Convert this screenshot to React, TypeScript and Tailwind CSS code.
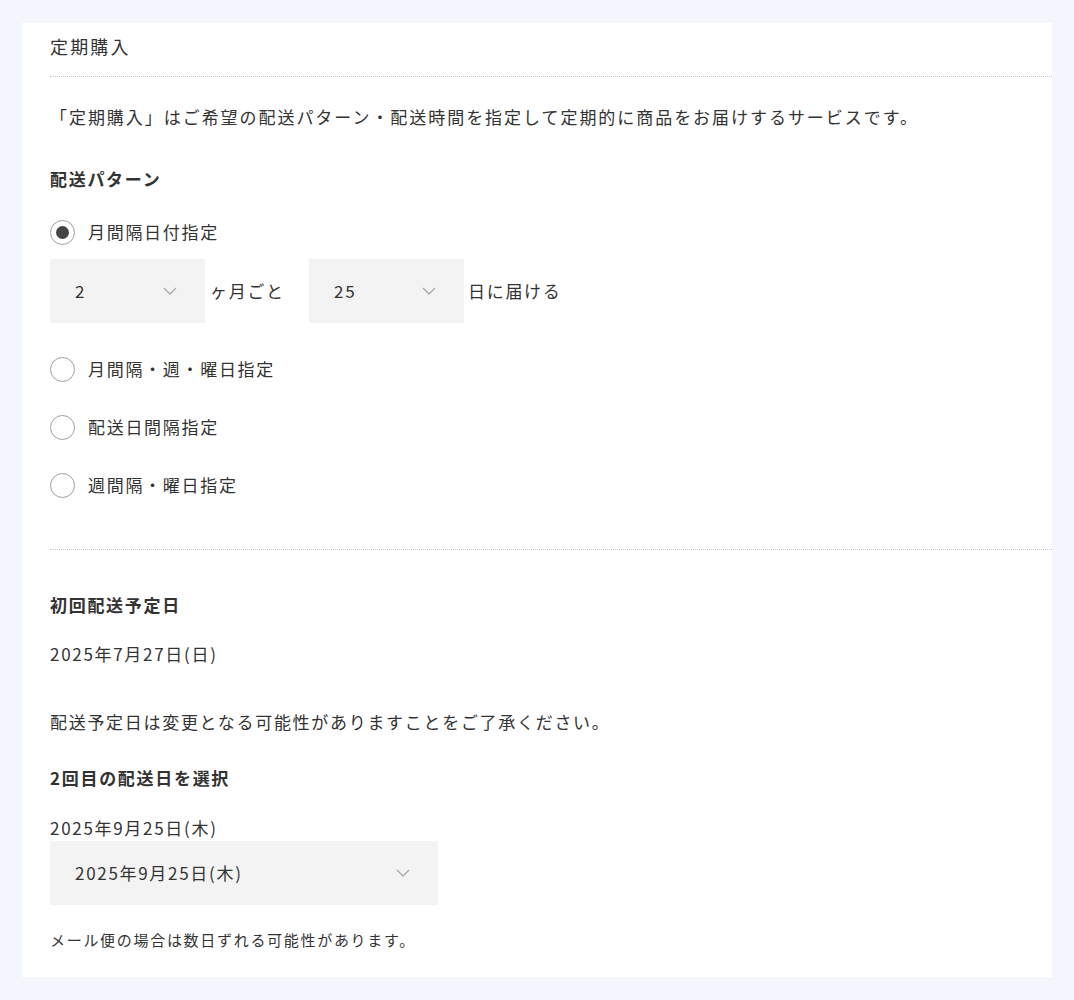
import { useState } from 'react';

const font = { fontFamily: '"Noto Sans CJK JP", "Noto Sans", sans-serif' };

const Chevron = () => (
  <svg className="w-[14px] h-[8px]" viewBox="0 0 14 8" fill="none" aria-hidden="true">
    <path d="M1 1l6 6 6-6" stroke="#a8a8a8" strokeWidth="1.3" />
  </svg>
);

const SelectBox = ({ value, width }: { value: string; width: string }) => (
  <div className={`flex items-center justify-between h-[64px] bg-[#f3f3f3] pl-[25px] pr-[28px] ${width}`}>
    <span>{value}</span>
    <Chevron />
  </div>
);

const Radio = ({ checked, label, onClick }: { checked: boolean; label: string; onClick: () => void }) => (
  <button type="button" onClick={onClick} className="flex items-center gap-[13px] h-[24px] text-left">
    <span className="flex items-center justify-center w-[25px] h-[25px] rounded-full border-[1.5px] border-[#a0a0a0] bg-white">
      {checked && <span className="w-[13px] h-[13px] rounded-full bg-[#444]" />}
    </span>
    <span>{label}</span>
  </button>
);

const patterns = ['月間隔日付指定', '月間隔・週・曜日指定', '配送日間隔指定', '週間隔・曜日指定'];

export default function App() {
  const [selected, setSelected] = useState(0);

  return (
    <div className="min-h-screen bg-[#f3f6fd] px-[22px] pt-[23px] pb-[22px]" style={font}>
      <div className="bg-white pl-[28px] pb-[27px] text-[#333] text-[17px] tracking-[0.1em] leading-[24px]">
        <h2 className="pt-[10px] pb-[17px] text-[18px] tracking-[0.12em] leading-[26px]">定期購入</h2>
        <div className="border-t border-dotted border-[#c4c4c4]" />

        <p className="mt-[28px] tracking-[0.115em]">「定期購入」はご希望の配送パターン・配送時間を指定して定期的に商品をお届けするサービスです。</p>

        <h3 className="mt-[38px] font-bold">配送パターン</h3>

        <div className="mt-[29px]">
          <Radio checked={selected === 0} label={patterns[0]} onClick={() => setSelected(0)} />
        </div>

        <div className="mt-[15px] flex items-center">
          <SelectBox value="2" width="w-[155px]" />
          <span className="ml-[5px] w-[99px]">ヶ月ごと</span>
          <SelectBox value="25" width="w-[155px]" />
          <span className="ml-[4px]">日に届ける</span>
        </div>

        <div className="mt-[34px] flex flex-col gap-[34px]">
          {patterns.slice(1).map((p, i) => (
            <Radio key={p} checked={selected === i + 1} label={p} onClick={() => setSelected(i + 1)} />
          ))}
        </div>

        <div className="mt-[52px] border-t border-dotted border-[#c4c4c4]" />

        <h3 className="mt-[43px] font-bold">初回配送予定日</h3>
        <p className="mt-[25px]">2025年7月27日(日)</p>

        <p className="mt-[44px]">配送予定日は変更となる可能性がありますことをご了承ください。</p>

        <h3 className="mt-[32px] font-bold">2回目の配送日を選択</h3>
        <p className="mt-[26px]">2025年9月25日(木)</p>
        <div className="mt-[1px]">
          <SelectBox value="2025年9月25日(木)" width="w-[388px]" />
        </div>

        <p className="mt-[25px] text-[15px] leading-[20px]">メール便の場合は数日ずれる可能性があります。</p>
      </div>
    </div>
  );
}
